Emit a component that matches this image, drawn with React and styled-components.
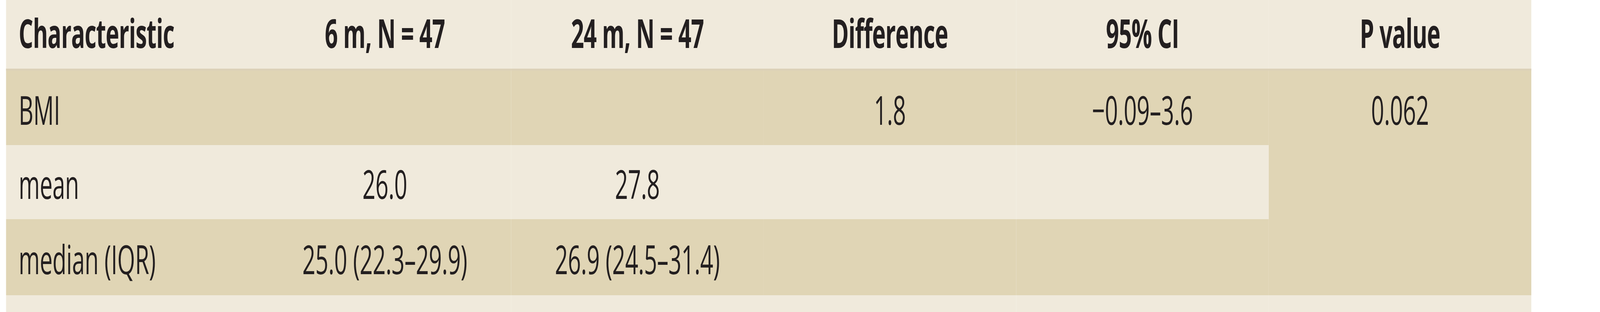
import React, { useLayoutEffect, useState } from "react";
import styled, { createGlobalStyle } from "styled-components";

const DESIGN_WIDTH = 7128;

const Global = createGlobalStyle`
  html, body { margin: 0; padding: 0; background: #ffffff; overflow: hidden; }
  body { font-family: "Open Sans", "Liberation Sans", sans-serif; color: #231f20; }
`;

/* The layout is drawn at the reference's 7128px width; the stage is fitted to the
   real window width (the browser may clamp the window narrower than 7128px). */
const Stage = styled.div`
  width: ${DESIGN_WIDTH}px;
  height: 800px;
  transform-origin: 0 0;
  overflow: hidden;
`;

const Table = styled.div`
  display: grid;
  grid-template-columns: repeat(5, 1125px) 1170px;
  grid-template-rows: 176px 196px 190px 195px 193px;
  width: 6795px;
  margin-left: 27px;
  font-size: 102px;
  line-height: 1;
`;

const Cell = styled.div`
  display: flex;
  align-items: center;
  justify-content: ${(p) => (p.$left ? "flex-start" : "center")};
  padding: ${(p) => (p.$head ? "0 0 8px" : "8px 0 0")};
  padding-left: ${(p) => (p.$left ? "56px" : "0")};
  background: ${(p) => (p.$dark ? "#e0d5b5" : "#f0eadc")};
  font-weight: ${(p) => (p.$head ? 700 : 400)};
  letter-spacing: ${(p) => (p.$head ? "-1.5px" : "-0.5px")};
  white-space: nowrap;
  box-sizing: border-box;
  ${(p) => (p.$topLine ? "border-top: 5px solid #dcd1b8;" : "")}
`;

const SpanCell = styled(Cell)`
  grid-row: span 3;
  align-items: flex-start;
  padding: 0;
`;

const SpanInner = styled.div`
  height: 191px;
  box-sizing: border-box;
  padding-top: 8px;
  display: flex;
  align-items: center;
`;

const headers = ["Characteristic", "6 m, N = 47", "24 m, N = 47", "Difference", "95% CI", "P value"];

function useFitScale() {
  const [k, setK] = useState(1);
  useLayoutEffect(() => {
    const update = () => setK(Math.min(1, window.innerWidth / DESIGN_WIDTH));
    update();
    window.addEventListener("resize", update);
    return () => window.removeEventListener("resize", update);
  }, []);
  return k;
}

export default function App() {
  const k = useFitScale();
  return (
    <>
      <Global />
      <Stage style={{ transform: `scaleX(${k})` }}>
        <Table>
          {headers.map((h, i) => (
            <Cell key={h} $head $left={i === 0}>
              {h}
            </Cell>
          ))}

          <Cell $dark $left $topLine>BMI</Cell>
          <Cell $dark $topLine />
          <Cell $dark $topLine />
          <Cell $dark $topLine>1.8</Cell>
          <Cell $dark $topLine>−0.09–3.6</Cell>
          <SpanCell $dark $topLine>
            <SpanInner>0.062</SpanInner>
          </SpanCell>

          <Cell $left>mean</Cell>
          <Cell>26.0</Cell>
          <Cell>27.8</Cell>
          <Cell />
          <Cell />

          <Cell $dark $left>median (IQR)</Cell>
          <Cell $dark>25.0 (22.3–29.9)</Cell>
          <Cell $dark>26.9 (24.5–31.4)</Cell>
          <Cell $dark />
          <Cell $dark />

          <Cell $left />
          <Cell />
          <Cell />
          <Cell />
          <Cell />
          <Cell />
        </Table>
      </Stage>
    </>
  );
}
